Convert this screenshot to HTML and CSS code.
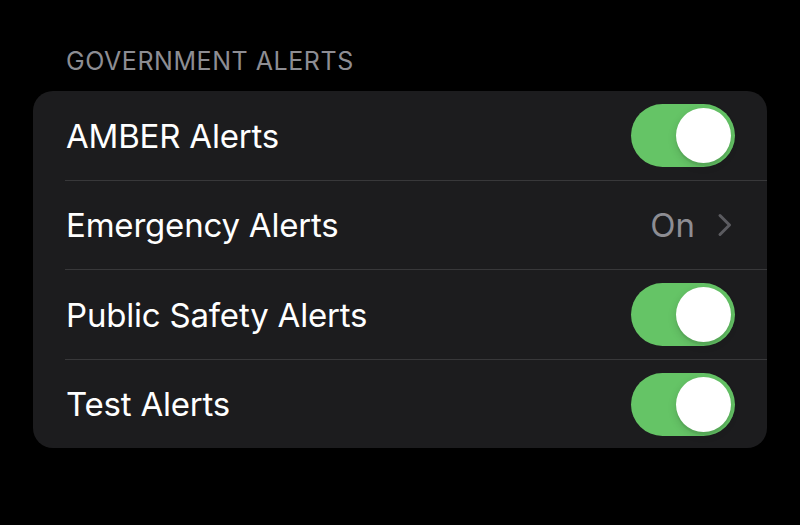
FILE: index.html
```html
<!DOCTYPE html>
<html>
<head>
<meta charset="utf-8">
<link rel="stylesheet" href="styles.css">
</head>
<body>
<div class="page">
  <div class="section-header">GOVERNMENT ALERTS</div>
  <div class="card">
    <div class="row">
      <div class="row-inner">
        <span class="label">AMBER Alerts</span>
        <span class="toggle"><span class="knob"></span></span>
      </div>
    </div>
    <div class="row short">
      <div class="row-inner">
        <span class="label">Emergency Alerts</span>
        <span class="detail">
          <span class="value">On</span>
          <svg class="chevron" width="16" height="24" viewBox="0 0 16 24"><path d="M3 2.5 L12.5 12 L3 21.5" fill="none" stroke="#5b5b60" stroke-width="3" stroke-linecap="round" stroke-linejoin="round"/></svg>
        </span>
      </div>
    </div>
    <div class="row">
      <div class="row-inner">
        <span class="label">Public Safety Alerts</span>
        <span class="toggle"><span class="knob"></span></span>
      </div>
    </div>
    <div class="row short last">
      <div class="row-inner">
        <span class="label">Test Alerts</span>
        <span class="toggle"><span class="knob"></span></span>
      </div>
    </div>
  </div>
</div>
</body>
</html>
```
FILE: styles.css
```css
html, body {
  margin: 0;
  padding: 0;
  background: #000;
}
body {
  width: 800px;
  height: 525px;
  overflow: hidden;
  font-family: Inter, "Noto Sans", sans-serif;
  -webkit-font-smoothing: antialiased;
}
.page {
  padding: 46px 33px 0 33px;
}
.section-header {
  padding-left: 33px;
  color: #8d8d93;
  font-size: 25px;
  line-height: 30px;
  letter-spacing: 0.55px;
  margin-bottom: 15px;
}
.card {
  background: #1c1c1e;
  border-radius: 20px;
  overflow: hidden;
  width: 734px;
}
.row {
  padding-left: 32px;
}
.row-inner {
  height: 89px;
  border-bottom: 1px solid #38383a;
  display: flex;
  align-items: center;
  justify-content: space-between;
  padding-left: 1px;
  padding-right: 32px;
}
.row.short .row-inner {
  height: 88px;
}
.row.last .row-inner {
  border-bottom: none;
}
.label {
  color: #fff;
  font-size: 33px;
  letter-spacing: -0.2px;
}
.toggle {
  width: 104px;
  height: 63px;
  border-radius: 32px;
  background: #65c466;
  display: flex;
  align-items: center;
  justify-content: flex-end;
  padding-right: 4px;
  box-sizing: border-box;
}
.knob {
  width: 55px;
  height: 55px;
  border-radius: 50%;
  background: #fff;
  box-shadow: 0 3px 8px rgba(0,0,0,0.15), 0 3px 1px rgba(0,0,0,0.06);
}
.detail {
  display: flex;
  align-items: center;
  gap: 22px;
  padding-right: 2px;
}
.value {
  color: #8d8d93;
  font-size: 33px;
}
.chevron {
  display: block;
}
```
